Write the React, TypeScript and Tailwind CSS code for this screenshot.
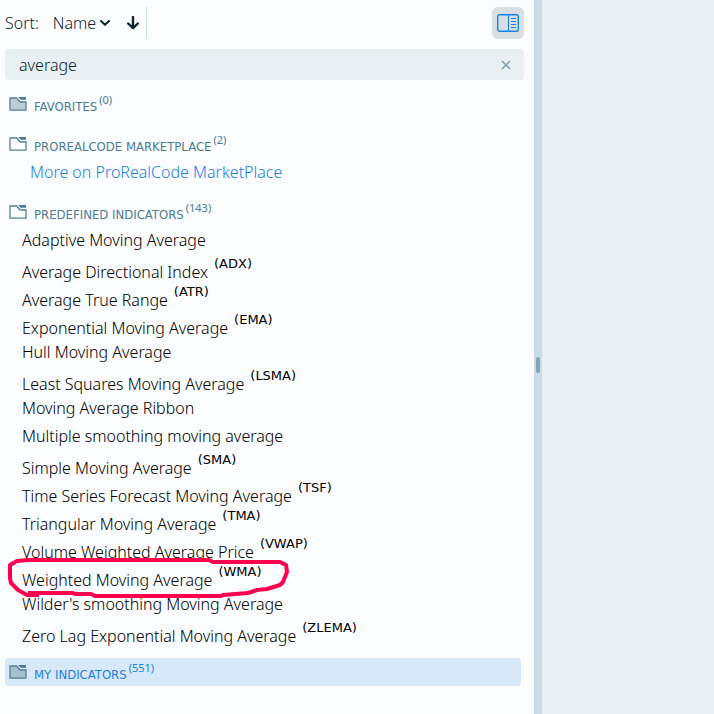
import React from "react";

interface Indicator {
  name: string;
  abbr?: string;
  circled?: boolean;
}

const indicators: Indicator[] = [
  { name: "Adaptive Moving Average" },
  { name: "Average Directional Index", abbr: "ADX" },
  { name: "Average True Range", abbr: "ATR" },
  { name: "Exponential Moving Average", abbr: "EMA" },
  { name: "Hull Moving Average" },
  { name: "Least Squares Moving Average", abbr: "LSMA" },
  { name: "Moving Average Ribbon" },
  { name: "Multiple smoothing moving average" },
  { name: "Simple Moving Average", abbr: "SMA" },
  { name: "Time Series Forecast Moving Average", abbr: "TSF" },
  { name: "Triangular Moving Average", abbr: "TMA" },
  { name: "Volume Weighted Average Price", abbr: "VWAP" },
  { name: "Weighted Moving Average", abbr: "WMA", circled: true },
  { name: "Wilder's smoothing Moving Average" },
  { name: "Zero Lag Exponential Moving Average", abbr: "ZLEMA" },
];

const FolderIcon = ({ fill = "none" }: { fill?: string }) => (
  <svg width="18" height="14" viewBox="0 0 18 14" className="shrink-0" aria-hidden="true">
    <path d="M1 1H7.5L11.2 5H17V13.2H1Z" fill={fill} stroke="#55809a" strokeWidth="1.3" />
    <path d="M9 0H17V2.7H11.8Z" fill="#4d7b94" />
  </svg>
);

const SidePanelIcon = () => (
  <svg width="22" height="18" viewBox="0 0 22 18" fill="none" stroke="#1683e8" aria-hidden="true">
    <rect x="0.7" y="0.7" width="20.6" height="16.6" rx="2" strokeWidth="1.4" />
    <path d="M11.5 1V17" strokeWidth="1.2" />
    <path d="M14 4.5H19M14 7.5H19M14 10.5H19M14 13.5H19" strokeWidth="1.2" />
  </svg>
);

// Hand-drawn marker loop around a row
const MarkerLoop = () => (
  <svg
    width="300"
    height="44"
    viewBox="0 0 300 44"
    fill="none"
    className="pointer-events-none absolute left-0 -top-2"
    aria-hidden="true"
  >
    <path
      d="M39 41H27L18 36L11 29L10 24V11L17 7L27 6H209L213 8H280L286 11L287 18L283 28L280 31L267 35L257 36L248 39L223 41L221 42H95L91 40H75L73 39H28"
      stroke="#ff004f"
      strokeWidth="4"
      strokeLinejoin="round"
    />
  </svg>
);

interface GroupHeaderProps {
  title: string;
  count: number;
  iconFill?: string;
  active?: boolean;
}

const GroupHeader: React.FC<GroupHeaderProps> = ({ title, count, iconFill, active }) => (
  <h2
    className={`ml-[5px] mr-[13px] flex h-7 rounded pl-1 text-[13px] font-normal ${
      active ? "bg-[#d7e8f8] text-[#1d7fe0]" : "text-[#4d7b94]"
    }`}
  >
    <span className="flex self-center">
      <FolderIcon fill={iconFill} />
    </span>
    <span className="ml-[7px] self-end leading-[22px] font-['DejaVu_Sans_Condensed','DejaVu_Sans',sans-serif]">
      {title}
    </span>
    <span className="ml-0.5 self-start text-[11px] leading-5">({count})</span>
  </h2>
);

const IndicatorRow: React.FC<{ item: Indicator }> = ({ item }) => (
  <li className="relative flex h-7 pl-[22px]">
    <span className={`leading-5 ${item.abbr ? "self-end" : "self-center"}`}>{item.name}</span>
    {item.abbr && (
      <span className="ml-[6px] self-start text-[13px] leading-5 font-normal font-['DejaVu_Sans',sans-serif]">
        ({item.abbr})
      </span>
    )}
    {item.circled && <MarkerLoop />}
  </li>
);

export default function App() {
  return (
    <div className="flex min-h-screen bg-[#e8f0f3] font-['Noto_Sans',sans-serif] text-base font-light text-black">
      <main className="min-w-0 flex-1 bg-[#fbfcfe]">
        <div className="flex h-[49px] items-start pt-[7px] pr-[10px] pl-[5px] text-[#0b2430]">
          <div className="flex h-8 items-center border-r border-[#c9dbe5]">
            <label htmlFor="sort">Sort:</label>
            <div className="relative ml-[14px] flex items-center">
              <select
                id="sort"
                className="field-sizing-content appearance-none bg-transparent pr-[14px] font-light outline-none"
                defaultValue="Name"
              >
                <option>Name</option>
              </select>
              <svg
                width="10"
                height="6"
                viewBox="0 0 10 6"
                fill="none"
                className="pointer-events-none absolute right-0"
                aria-hidden="true"
              >
                <path d="M1 1L5 4.7L9 1" stroke="#0b2430" strokeWidth="2" strokeLinecap="round" />
              </svg>
            </div>
            <button type="button" aria-label="Sort direction" className="mr-[7px] ml-[17px]">
              <svg width="12" height="14" viewBox="0 0 12 14" fill="none" aria-hidden="true">
                <path
                  d="M6 1V12M1.2 7.5L6 12.2L10.8 7.5"
                  stroke="#0b2430"
                  strokeWidth="2.4"
                  strokeLinecap="round"
                  strokeLinejoin="round"
                />
              </svg>
            </button>
          </div>
          <button
            type="button"
            aria-label="Toggle side panel"
            className="ml-auto flex h-8 w-8 items-center justify-center rounded-md bg-[#d8e0e4]"
          >
            <SidePanelIcon />
          </button>
        </div>

        <div className="mr-[10px] ml-[5px] flex h-[31px] items-center rounded bg-[#e8f0f3] pr-[13px] pl-[14px]">
          <input
            type="text"
            aria-label="Search indicators"
            defaultValue="average"
            className="min-w-0 flex-1 bg-transparent font-light text-[#0b2430] outline-none"
          />
          <button type="button" aria-label="Clear search">
            <svg width="10" height="10" viewBox="0 0 10 10" aria-hidden="true">
              <path d="M1 1L9 9M9 1L1 9" stroke="#7b9eb1" strokeWidth="1.5" />
            </svg>
          </button>
        </div>

        <div className="flex flex-col gap-3 pt-[10px] pb-7">
          <section>
            <GroupHeader title="FAVORITES" count={0} iconFill="#bccdd6" />
          </section>
          <section>
            <GroupHeader title="PROREALCODE MARKETPLACE" count={2} />
            <a href="#marketplace" className="flex h-7 items-center pl-[30px] text-[#1a7fe6]">
              More on ProRealCode MarketPlace
            </a>
          </section>
          <section>
            <GroupHeader title="PREDEFINED INDICATORS" count={143} />
            <ul>
              {indicators.map((item) => (
                <IndicatorRow key={item.name} item={item} />
              ))}
            </ul>
          </section>
          <section>
            <GroupHeader title="MY INDICATORS" count={551} iconFill="#a5bfcf" active />
          </section>
        </div>
      </main>

      <div className="flex w-2 items-center justify-center bg-[#c9dbe5]">
        <div className="mt-4 h-4 w-1 rounded-full bg-[#82a6b8]" />
      </div>
      <aside className="w-[172px]" />
    </div>
  );
}
